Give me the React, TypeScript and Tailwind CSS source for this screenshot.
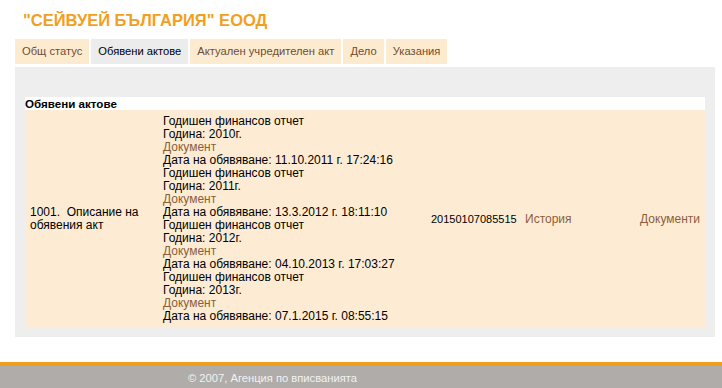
import React from 'react';

const tabs = [
  { label: 'Общ статус', active: false },
  { label: 'Обявени актове', active: true },
  { label: 'Актуален учредителен акт', active: false },
  { label: 'Дело', active: false },
  { label: 'Указания', active: false },
];

const reports = [
  { year: '2010г.', date: '11.10.2011 г. 17:24:16' },
  { year: '2011г.', date: '13.3.2012 г. 18:11:10' },
  { year: '2012г.', date: '04.10.2013 г. 17:03:27' },
  { year: '2013г.', date: '07.1.2015 г. 08:55:15' },
];

const App: React.FC = () => {
  return (
    <div className="w-[722px] min-h-[388px] bg-white font-['Liberation_Sans',Arial,sans-serif] text-[12px] leading-[13px] text-black flex flex-col">
      <h1 className="pl-[23px] pt-[10px] mb-[9px] text-[16.5px] leading-[20px] font-bold text-[#f29f1f]">
        "СЕЙВУЕЙ БЪЛГАРИЯ" ЕООД
      </h1>

      {/* tabs */}
      <div className="flex gap-[2px] ml-[15px] h-[25px] text-[11.2px]">
        {tabs.map((t) => (
          <div
            key={t.label}
            className={
              t.active
                ? 'px-[7px] flex items-center bg-[#ececec] text-black'
                : 'px-[7px] flex items-center bg-[#fdebd0] text-[#6e4d33]'
            }
          >
            {t.label}
          </div>
        ))}
      </div>

      {/* panel */}
      <div className="ml-[15px] w-[700px] mt-[3px] bg-[#eeeeee] pt-[30px] px-[10px] pb-[10px]">
        <div className="bg-white font-bold h-[13px] text-[11.6px]">Обявени актове</div>
        <div className="bg-[#fdecd3] grid grid-cols-[138px_268px_94px_1fr_auto] items-center pt-[5px] pb-[4px]">
          <div className="pl-[5px] pr-[8px] whitespace-pre-wrap">{'1001.  Описание на обявения акт'}</div>
          <div className="flex flex-col">
            {reports.map((r) => (
              <React.Fragment key={r.year}>
                <span>Годишен финансов отчет</span>
                <span>Година: {r.year}</span>
                <a className="text-[#8b5e3c]">Документ</a>
                <span>Дата на обявяване: {r.date}</span>
              </React.Fragment>
            ))}
          </div>
          <div className="text-[11px]">20150107085515</div>
          <a className="text-[#8b5e3c]">История</a>
          <a className="text-[#8b5e3c] pr-[5px] text-right">Документи</a>
        </div>
      </div>

      {/* footer */}
      <div className="mt-[25px] border-t-[4px] border-[#f09e1f] bg-[#b0aca9] h-[26px] pl-[188px] pt-[4px] text-[11.2px] text-[#f2f2f2] leading-[16px]">
        © 2007, Агенция по вписванията
      </div>
    </div>
  );
};

export default App;
